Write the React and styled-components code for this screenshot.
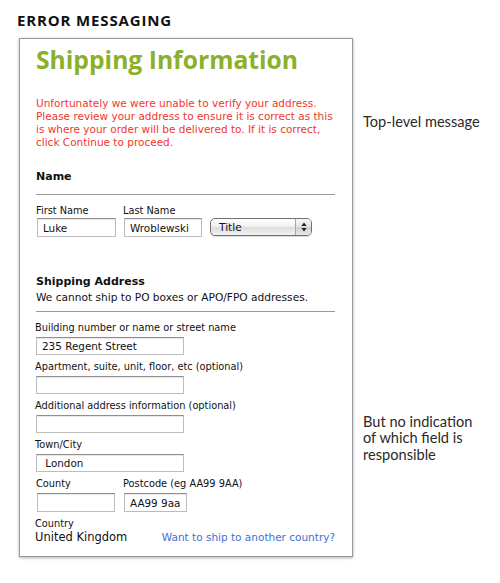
import React from "react";
import styled, { createGlobalStyle } from "styled-components";

const GlobalStyle = createGlobalStyle`
  body {
    margin: 0;
    background: #fff;
  }
`;

function TextField({ label, value, width }) {
  return (
    <Field>
      <Label>{label}</Label>
      <Input width={width} defaultValue={value} />
    </Field>
  );
}

function TitleSelect() {
  return (
    <Select>
      <SelectText>Title</SelectText>
      <SelectArrows>
        <svg width="6" height="10" viewBox="0 0 6 10">
          <path d="M3 0.5 L5.6 4 L0.4 4 Z" fill="#222" />
          <path d="M3 9.5 L5.6 6 L0.4 6 Z" fill="#222" />
        </svg>
      </SelectArrows>
    </Select>
  );
}

function App() {
  return (
    <Page>
      <GlobalStyle />
      <Heading>ERROR MESSAGING</Heading>
      <Row>
        <Frame>
          <Title>Shipping Information</Title>
          <ErrorText>
            Unfortunately we were unable to verify your address.
            <br />
            Please review your address to ensure it is correct as this
            <br />
            is where your order will be delivered to. If it is correct,
            <br />
            click Continue to proceed.
          </ErrorText>

          <Section mt={21}>
            <SectionHead pb={10}>
              <SectionTitle>Name</SectionTitle>
            </SectionHead>
            <NameRow>
              <Field>
                <Label>First Name</Label>
                <Input width={79} height={19} mt={1} defaultValue="Luke" />
              </Field>
              <Field>
                <Label>Last Name</Label>
                <Input width={78} height={19} mt={1} defaultValue="Wroblewski" />
              </Field>
              <TitleSelect />
            </NameRow>
          </Section>

          <Section mt={33}>
            <SectionHead pb={7}>
              <SectionTitle>Shipping Address</SectionTitle>
              <SectionNote>We cannot ship to PO boxes or APO/FPO addresses.</SectionNote>
            </SectionHead>
            <Fields>
              <TextField
                label="Building number or name or street name"
                value="235 Regent Street"
                width={148}
              />
              <TextField
                label="Apartment, suite, unit, floor, etc (optional)"
                value=""
                width={148}
              />
              <TextField
                label="Additional address information (optional)"
                value=""
                width={148}
              />
              <TextField label="Town/City" value=" London" width={148} />
              <PairRow>
                <Field>
                  <Label>County</Label>
                  <Input width={78} height={19} defaultValue="" />
                </Field>
                <Field>
                  <Label>Postcode (eg AA99 9AA)</Label>
                  <Input width={63} height={19} defaultValue="AA99 9aa" />
                </Field>
              </PairRow>
              <CountryRow>
                <div>
                  <Label>Country</Label>
                  <CountryValue>United Kingdom</CountryValue>
                </div>
                <Link href="#">Want to ship to another country?</Link>
              </CountryRow>
            </Fields>
          </Section>
        </Frame>

        <Notes>
          <Note mt={76}>Top-level message</Note>
          <Note mt={283}>
            But no indication
            <br />
            of which field is
            <br />
            responsible
          </Note>
        </Notes>
      </Row>
    </Page>
  );
}

const Page = styled.div`
  width: 500px;
  height: 583px;
  padding-top: 11px;
  box-sizing: border-box;
  overflow: hidden;
`;

const Heading = styled.h1`
  margin: 0 0 9px 17px;
  font-family: "Open Sans", sans-serif;
  font-weight: 700;
  font-size: 15px;
  line-height: 18px;
  letter-spacing: 0.85px;
  color: #111;
`;

const Row = styled.div`
  display: flex;
  align-items: flex-start;
`;

const Frame = styled.div`
  margin-left: 19px;
  width: 334px;
  box-sizing: border-box;
  border: 1px solid #999;
  box-shadow: 0 1px 3px rgba(0, 0, 0, 0.3);
  padding: 6px 17px 11px 16px;
  font-family: "DejaVu Sans", sans-serif;
  color: #111;
`;

const Title = styled.h2`
  margin: 0;
  font-family: "Open Sans", sans-serif;
  font-weight: 700;
  font-size: 24.7px;
  line-height: 30px;
  color: #8bb02a;
`;

const ErrorText = styled.p`
  margin: 22px 0 0;
  font-size: 10.5px;
  line-height: 13px;
  color: #f3362c;
  white-space: nowrap;
`;

const Section = styled.div`
  margin-top: ${(p) => p.mt}px;
`;

const SectionHead = styled.div`
  border-bottom: 1px solid #9a9a9a;
  padding-bottom: ${(p) => p.pb}px;
  margin-bottom: 9px;
`;

const SectionTitle = styled.div`
  font-weight: 700;
  font-size: 11px;
  line-height: 14px;
  color: #111;
`;

const SectionNote = styled.div`
  margin-top: 2px;
  font-size: 10.6px;
  line-height: 13px;
  color: #111;
`;

const NameRow = styled.div`
  display: flex;
  align-items: flex-end;
  gap: 8px;
  padding-left: 1px;
`;

const Fields = styled.div`
  display: flex;
  flex-direction: column;
`;

const Field = styled.div`
  display: flex;
  flex-direction: column;
  margin-bottom: 5px;
`;

const Label = styled.div`
  font-size: 9.8px;
  line-height: 13px;
  color: #111;
  margin-left: -1px;
  white-space: nowrap;
`;

const Input = styled.input`
  box-sizing: border-box;
  width: ${(p) => p.width}px;
  height: ${(p) => p.height || 18}px;
  margin: ${(p) => (p.mt === undefined ? 3 : p.mt)}px 0 0;
  padding: 0 5px;
  border: 1px solid #bdbdbd;
  border-top-color: #8f8f8f;
  box-shadow: inset 0 1px 1px rgba(0, 0, 0, 0.1);
  background: #fff;
  font-family: "DejaVu Sans", sans-serif;
  font-size: 10.4px;
  color: #111;
  outline: none;
  white-space: pre;
`;

const Select = styled.div`
  box-sizing: border-box;
  width: 102px;
  height: 18px;
  margin-bottom: 6px;
  display: flex;
  align-items: stretch;
  border: 1px solid #707070;
  border-radius: 5px;
  background: linear-gradient(#ffffff, #f1f1f1 45%, #dcdcdc 55%, #f4f4f4);
  box-shadow: 0 1px 1px rgba(0, 0, 0, 0.15);
  overflow: hidden;
`;

const SelectText = styled.span`
  flex: 1;
  padding-left: 8px;
  font-size: 10.6px;
  line-height: 16px;
  color: #111;
`;

const SelectArrows = styled.span`
  width: 15px;
  display: flex;
  align-items: center;
  justify-content: center;
  border-left: 1px solid #a5a5a5;
  background: linear-gradient(#f6f6f6, #e2e2e2 50%, #cfcfcf 52%, #eaeaea);
`;

const PairRow = styled.div`
  display: flex;
  gap: 9px;
  padding-left: 1px;
`;

const CountryRow = styled.div`
  display: flex;
  justify-content: space-between;
  align-items: flex-end;
`;

const CountryValue = styled.div`
  font-size: 11.5px;
  line-height: 15px;
  color: #111;
  margin-left: -1px;
`;

const Link = styled.a`
  font-size: 10.5px;
  line-height: 15px;
  color: #3e6fd3;
  text-decoration: none;
`;

const Notes = styled.div`
  margin-left: 10px;
  display: flex;
  flex-direction: column;
`;

const Note = styled.div`
  margin-top: ${(p) => p.mt}px;
  font-family: Lato, sans-serif;
  font-size: 14.6px;
  line-height: 16.5px;
  color: #2a2a2a;
`;

export default App;
